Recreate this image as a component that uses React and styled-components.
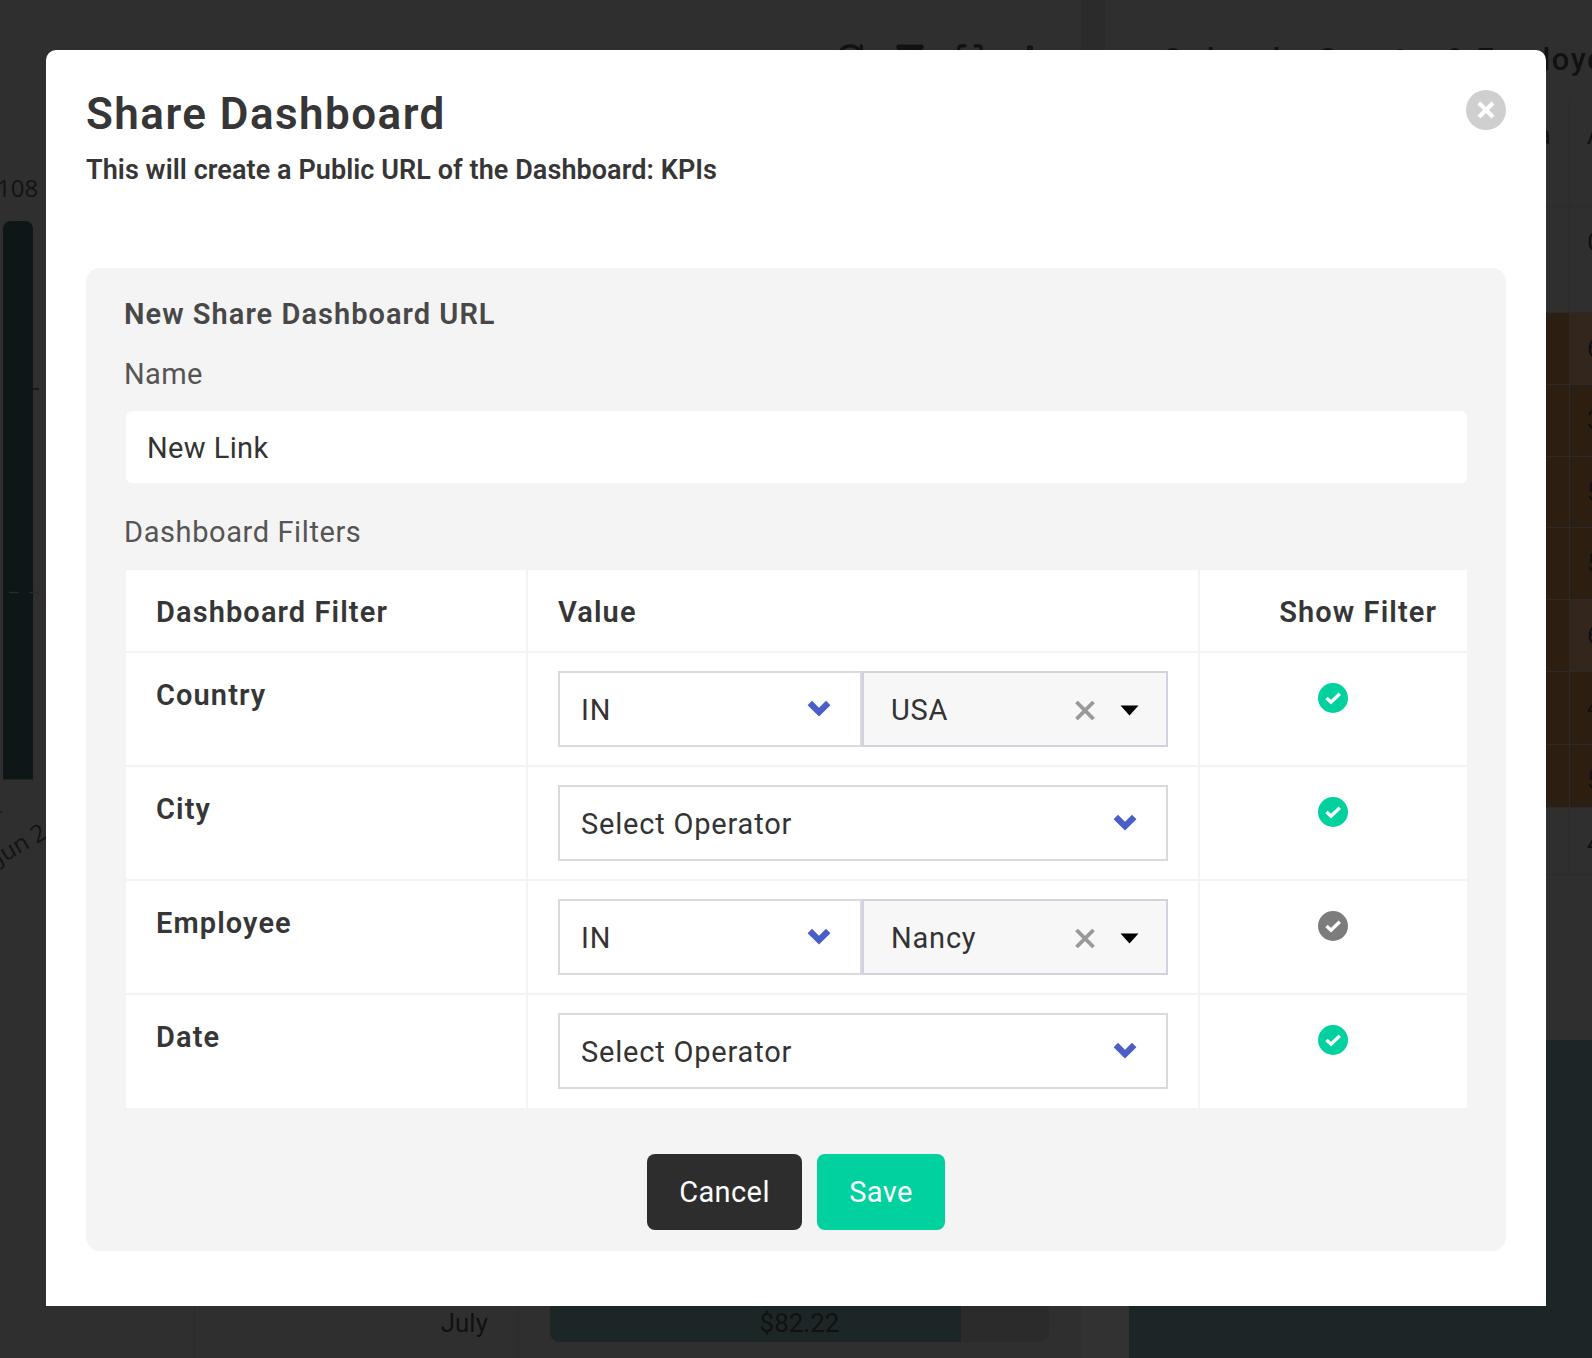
import React from 'react'
import styled, { createGlobalStyle } from 'styled-components'
import { RefreshCw, Filter, Maximize, MoreVertical, Table2 } from 'lucide-react'

const FONT = '"Roboto", "Liberation Sans", sans-serif'

const GlobalStyle = createGlobalStyle`
  html, body { margin: 0; padding: 0; background: #2e2e2e; }
  body { font-family: ${FONT}; }
  * { box-sizing: border-box; }
`

const Page = styled.div`
  position: relative;
  width: 1592px;
  height: 1358px;
  overflow: hidden;
`

/* dimmed dashboard behind the modal */
const Backdrop = styled.div`
  display: grid;
  grid-template-columns: 1081px 24px 487px;
  height: 100%;
  filter: blur(0.5px);
  color: #111;
`

const LeftCol = styled.div`
  display: flex;
  flex-direction: column;
  background: #2f2f2f;
`

const Toolbar = styled.div`
  height: 99px;
  padding: 42px 36px 0 0;
  display: flex;
  justify-content: flex-end;
  gap: 30px;
  color: #111;
`

const ChartSvg = styled.svg`
  display: block;
  width: 100%;
  height: 780px;
  text {
    font-family: "Open Sans", sans-serif;
    font-size: 24px;
    fill: #131313;
  }
`

const MonthRow = styled.div`
  margin-top: auto;
  height: 68px;
  display: grid;
  grid-template-columns: 195px 324px 1fr;
  font-size: 26px;
`

const MonthCell = styled.div`
  border-right: 1px solid #2b2b2b;
  padding: 18px 30px 0 0;
  text-align: right;
`

const BarCell = styled.div`
  padding: 0 32px 16px 31px;
`

const BarTrack = styled.div`
  position: relative;
  height: 100%;
  background: #2b2b2b;
  border-radius: 0 0 10px 10px;
  overflow: hidden;
`

const BarFill = styled.div`
  height: 100%;
  width: 82.4%;
  background: #1c2627;
`

const BarValue = styled.span`
  position: absolute;
  inset: 18px 0 0 0;
  text-align: center;
`

const Gutter = styled.div`
  background: linear-gradient(#2b2b2b 0 60%, #323232 60%);
`

const RightCol = styled.div`
  display: flex;
  flex-direction: column;
  background: #2f2f2f;
`

const CardTitle = styled.div`
  height: 100px;
  padding: 42px 0 0 38px;
  display: flex;
  align-items: flex-start;
  gap: 19px;
  white-space: nowrap;
  font-size: 31px;
  font-weight: 500;
  line-height: 36px;
  letter-spacing: 1.45px;
`

const BgRow = styled.div`
  display: grid;
  grid-template-columns: 465px 1fr;
  height: ${p => p.$h}px;
  border-bottom: 1px solid #2b2b2b;
  background: ${p => (p.$brown ? '#2c1f11' : '#2f2f2f')};
  font-size: 26px;
`

const BgCell = styled.div`
  padding: 20px 0 0 17px;
  ${p => p.$first && 'text-align: right; padding: 20px 18px 0 0; border-right: 1px solid #2a2a2a;'}
  ${p => p.$tint && 'background: #33271d;'}
`

const BgBottom = styled.div`
  margin-top: auto;
  height: 318px;
  padding-left: 24px;
  background: #323232;
`

const TealPanel = styled.div`
  height: 100%;
  background: #1c2627;
`

/* modal */
const Overlay = styled.div`
  position: absolute;
  inset: 0;
  padding: 50px 46px 52px;
`

const Modal = styled.div`
  width: 1500px;
  height: 1256px;
  padding: 40px 40px 0;
  background: #fff;
  border-radius: 10px 10px 0 0;
  color: #333;
`

const Header = styled.div`
  height: 178px;
  display: flex;
  justify-content: space-between;
  align-items: flex-start;
`

const Title = styled.h1`
  margin: -4px 0 10px;
  font-size: 44px;
  line-height: 56px;
  font-weight: 600;
  letter-spacing: 1.45px;
  color: #363636;
`

const Subtitle = styled.p`
  margin: 0;
  font-size: 27px;
  line-height: 36px;
  font-weight: 600;
  letter-spacing: 0.07px;
  color: #363636;
`

const CloseButton = styled.button`
  width: 40px;
  height: 40px;
  padding: 0;
  border: 0;
  border-radius: 50%;
  background: #cfcfcf;
  display: flex;
  align-items: center;
  justify-content: center;
`

const Panel = styled.div`
  height: 983px;
  padding: 28px 39px 0 40px;
  background: #f4f4f4;
  border-radius: 14px;
`

const PanelHeading = styled.h2`
  margin: 0 0 24px -2px;
  font-size: 29px;
  line-height: 36px;
  font-weight: 600;
  letter-spacing: 1.03px;
  color: #484848;
`

const FieldLabel = styled.div`
  margin: 0 0 ${p => p.$gap}px -2px;
  font-size: 29px;
  line-height: 36px;
  font-weight: 400;
  letter-spacing: ${p => p.$ls}px;
  color: #555;
`

const NameInput = styled.div`
  height: 72px;
  margin-bottom: 31px;
  padding: 2px 21px 0;
  display: flex;
  align-items: center;
  background: #fff;
  border-radius: 6px;
  font-size: 29px;
  letter-spacing: 0.4px;
  color: #333;
`

const FilterTable = styled.div`
  background: #fff;
`

const TableRow = styled.div`
  display: grid;
  grid-template-columns: 402px 672px 1fr;
  height: ${p => p.$h}px;
  border-bottom: ${p => (p.$last ? 0 : '2px solid #f4f4f4')};
`

const Cell = styled.div`
  border-right: 2px solid #f4f4f4;
  padding: 25px 30px;
  font-size: 29px;
  line-height: 34px;
  font-weight: 600;
  letter-spacing: 1.1px;
  color: #363636;
  &:last-child { border-right: 0; }
`

const HeadEnd = styled(Cell)`
  text-align: right;
`

const SelectCell = styled.div`
  border-right: 2px solid #f4f4f4;
  padding: 18px 30px;
  display: flex;
`

const ShowCell = styled.div`
  padding: 30px 1px 0 0;
  display: flex;
  justify-content: center;
  align-items: flex-start;
`

const SelectBox = styled.div`
  flex: ${p => (p.$grow ? 1 : '0 0 auto')};
  width: ${p => (p.$w ? `${p.$w}px` : 'auto')};
  height: 76px;
  display: flex;
  align-items: center;
  padding: ${p => (p.$multi ? '0 27px 0 27px' : '0 29px 0 21px')};
  border: 2px solid ${p => (p.$multi ? '#d0d3de' : '#d9dade')};
  background: ${p => (p.$multi ? '#f7f7f8' : '#fff')};
  font-size: 29px;
  letter-spacing: 0.8px;
  color: #333;
`

const SelectText = styled.span`
  flex: 1;
  margin-top: 2px;
`

const ChevronIcon = styled.svg`
  display: block;
  margin-bottom: 2px;
`

const ClearIcon = styled.svg`
  display: block;
  margin: 2px 25px 0 0;
`

const CaretIcon = styled.svg`
  display: block;
  margin-top: 2px;
`

const Footer = styled.div`
  margin: 46px 1px 0 0;
  display: flex;
  justify-content: center;
  gap: 15px;
`

const Button = styled.button`
  width: ${p => p.$w}px;
  height: 76px;
  border: 0;
  border-radius: 8px;
  background: ${p => p.$bg};
  color: #fff;
  font-family: ${FONT};
  font-size: 29px;
  letter-spacing: 0.4px;
`

const Chevron = () => (
  <ChevronIcon width="24" height="18" viewBox="0 0 24 18">
    <path d="M2.800 4 L12 13.200 L21.200 4" fill="none" stroke="#4a5dc9" strokeWidth="6.200" />
  </ChevronIcon>
)

const Caret = () => (
  <CaretIcon width="19" height="11" viewBox="0 0 19 11">
    <path d="M0.500 0.500 H18.500 L9.500 10.500 Z" fill="#000" />
  </CaretIcon>
)

const Clear = () => (
  <ClearIcon width="20" height="19" viewBox="0 0 20 19">
    <path d="M1.500 1 L18.500 18 M18.500 1 L1.500 18" stroke="#999" strokeWidth="3.800" />
  </ClearIcon>
)

const CheckCircle = ({ color }) => (
  <svg width="30" height="30" viewBox="0 0 30 30">
    <circle cx="15" cy="15" r="15" fill={color} />
    <path d="M8.500 15 L13 19.200 L21.800 10.800" fill="none" stroke="#fff" strokeWidth="3.400" />
  </svg>
)

const rows = [
  { name: 'Country', values: ['IN', 'USA'], on: true },
  { name: 'City', on: true },
  { name: 'Employee', values: ['IN', 'Nancy'], on: false },
  { name: 'Date', on: true },
]

const bgRows = [
  { h: 107, a: 'a', b: 'A' },
  { h: 106, a: '', b: 'C' },
  { h: 72, a: '', b: '6', brown: true, tint: true },
  { h: 72, a: '', b: '3', brown: true },
  { h: 71, a: '', b: '5', brown: true },
  { h: 72, a: '', b: '5', brown: true },
  { h: 72, a: '', b: '6', brown: true, tint: true },
  { h: 73, a: '', b: '4', brown: true },
  { h: 63, a: '', b: '5', brown: true },
  { h: 67, a: '', b: '4' },
]

const App = () => (
  <Page>
    <GlobalStyle />
    <Backdrop>
      <LeftCol>
        <Toolbar>
          <RefreshCw size={30} strokeWidth={2.6} />
          <Filter size={30} fill="currentColor" />
          <Maximize size={30} strokeWidth={2.6} />
          <MoreVertical size={30} strokeWidth={3} />
        </Toolbar>
        <ChartSvg viewBox="0 0 1081 780">
          <text x="-3" y="98">108</text>
          <path d="M3 681 V130 a8 8 0 0 1 8-8 H25 a8 8 0 0 1 8 8 V681 Z" fill="#0f1617" />
          <path d="M33 290 H39" stroke="#141414" strokeWidth="1.5" />
          <path d="M9 493.500 H39" stroke="#1e2e2e" strokeWidth="1.5" strokeDasharray="10 10" />
          <path d="M0 681 H1081" stroke="#333" strokeWidth="1" />
          <path d="M0 713 H2" stroke="#1a1a1a" strokeWidth="1.5" />
          <text transform="translate(0 766) rotate(-30)">Jun 2</text>
        </ChartSvg>
        <MonthRow>
          <MonthCell />
          <MonthCell>July</MonthCell>
          <BarCell>
            <BarTrack>
              <BarFill />
              <BarValue>$82.22</BarValue>
            </BarTrack>
          </BarCell>
        </MonthRow>
      </LeftCol>
      <Gutter />
      <RightCol>
        <CardTitle>
          <Table2 size={32} strokeWidth={2} />
          Orders by Country &amp; Employee
        </CardTitle>
        {bgRows.map((r, i) => (
          <BgRow key={i} $h={r.h} $brown={r.brown}>
            <BgCell $first>{r.a}</BgCell>
            <BgCell $tint={r.tint}>{r.b}</BgCell>
          </BgRow>
        ))}
        <BgBottom>
          <TealPanel />
        </BgBottom>
      </RightCol>
    </Backdrop>

    <Overlay>
      <Modal>
        <Header>
          <div>
            <Title>Share Dashboard</Title>
            <Subtitle>This will create a Public URL of the Dashboard: KPIs</Subtitle>
          </div>
          <CloseButton aria-label="Close">
            <svg width="18" height="18" viewBox="0 0 18 18">
              <path d="M2 2 L16 16 M16 2 L2 16" stroke="#fff" strokeWidth="4.2" />
            </svg>
          </CloseButton>
        </Header>
        <Panel>
          <PanelHeading>New Share Dashboard URL</PanelHeading>
          <FieldLabel $gap={19} $ls={0.35}>Name</FieldLabel>
          <NameInput>New Link</NameInput>
          <FieldLabel $gap={20} $ls={0.6}>Dashboard Filters</FieldLabel>
          <FilterTable>
            <TableRow $h={83}>
              <Cell>Dashboard Filter</Cell>
              <Cell>Value</Cell>
              <HeadEnd>Show Filter</HeadEnd>
            </TableRow>
            {rows.map((r, i) => (
              <TableRow key={r.name} $h={i === rows.length - 1 ? 113 : 114} $last={i === rows.length - 1}>
                <Cell>{r.name}</Cell>
                <SelectCell>
                  {r.values ? (
                    <>
                      <SelectBox $w={304}>
                        <SelectText>{r.values[0]}</SelectText>
                        <Chevron />
                      </SelectBox>
                      <SelectBox $multi $grow>
                        <SelectText>{r.values[1]}</SelectText>
                        <Clear />
                        <Caret />
                      </SelectBox>
                    </>
                  ) : (
                    <SelectBox $grow>
                      <SelectText>Select Operator</SelectText>
                      <Chevron />
                    </SelectBox>
                  )}
                </SelectCell>
                <ShowCell>
                  <CheckCircle color={r.on ? '#00d19f' : '#7c7c7c'} />
                </ShowCell>
              </TableRow>
            ))}
          </FilterTable>
          <Footer>
            <Button $w={155} $bg="#2d2d2d">Cancel</Button>
            <Button $w={128} $bg="#00d19f">Save</Button>
          </Footer>
        </Panel>
      </Modal>
    </Overlay>
  </Page>
)

export default App
